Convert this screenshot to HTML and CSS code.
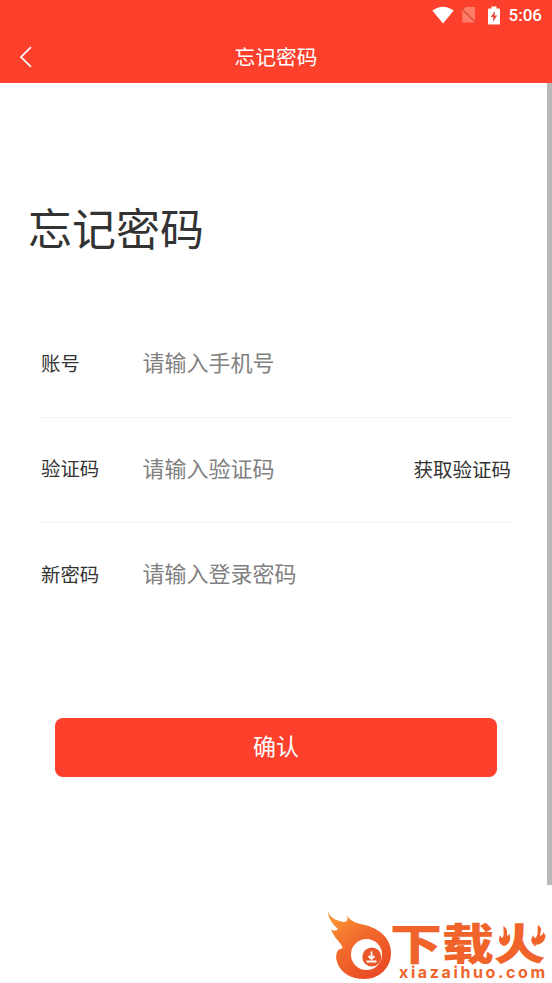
FILE: index.html
```html
<!DOCTYPE html>
<html lang="zh-CN">
<head>
<meta charset="utf-8">
<title>忘记密码</title>
<link rel="stylesheet" href="styles.css">
</head>
<body>
<header class="top">
  <div class="status">
    <svg class="wifi" width="22" height="18" viewBox="0 0 22 18"><path d="M0.3 4.5Q11 -3.2 21.7 4.5L11 17.5Z" fill="#fff"/></svg>
    <svg class="sim" width="18" height="18" viewBox="0 0 18 18"><path d="M6 1H15V16.500H2.300V4.500Z" fill="#ff7d67"/><path d="M.8 2L16.200 17" stroke="#d94a36" stroke-width="1.400"/></svg>
    <svg class="battery" width="12" height="19" viewBox="0 0 12 19"><path d="M3.5 0.5h5v2H11q1 0 1 1V17.500q0 1-1 1H1q-1 0-1-1V3.500q0-1 1-1h2.500Z" fill="#fff"/><path d="M7 5L2.800 11H5.400L4.800 16L9.200 9.500H6.500Z" fill="#e84634"/></svg>
    <span class="time">5:06</span>
  </div>
  <nav class="nav">
    <svg class="back" width="14" height="22" viewBox="0 0 14 22"><path d="M12 1.200L2 11L12 20.800" fill="none" stroke="#fff" stroke-width="1.700"/></svg>
    <h1 class="nav-title">忘记密码</h1>
  </nav>
</header>
<div class="view">
  <main class="page">
    <h2 class="title">忘记密码</h2>
    <form class="form">
      <label class="row"><span class="label">账号</span><span class="hint">请输入手机号</span></label>
      <label class="row"><span class="label">验证码</span><span class="hint">请输入验证码</span><span class="code">获取验证码</span></label>
      <label class="row"><span class="label">新密码</span><span class="hint">请输入登录密码</span></label>
    </form>
    <button class="submit" type="button">确认</button>
  </main>
  <div class="scrollbar"></div>
</div>
<footer class="footer">
  <svg class="logo" width="232" height="83" viewBox="0 0 232 83">
    <defs>
      <linearGradient id="fire" x1="0" y1="0" x2=".7" y2="1"><stop offset="0" stop-color="#fa9d35"/><stop offset=".5" stop-color="#f26a2c"/><stop offset="1" stop-color="#e94b24"/></linearGradient>
    </defs>
    <path d="M8 11.500C10 17 15 20 21 21.500C25 22.500 28 22 27.500 18L26.500 15C30 21 36 23 43 24.500C59 28 71 38 71 53C71 68 59 79 44.500 79C30 79 19 72 16.500 60C15.500 55 17 50 20 49C22 49 23 48 22 46C18 40 13 36 11 29C13 31 16 31 18 29C13 25 8 18 8 11.500Z" fill="url(#fire)"/>
    <circle cx="46.500" cy="54.500" r="15.500" fill="#fff"/>
    <circle cx="51.800" cy="57" r="9.500" fill="#e9572a"/>
    <path d="M51.500 51.500V58M48.500 56L51.500 59L54.500 56M46.500 61.500H56.500" fill="none" stroke="#fff" stroke-width="1.800"/>
    <g class="brand" transform="translate(0 60.300) scale(1 .83)">
      <text x="70" y="0">下</text><text x="122" y="0">载</text><text x="173.500" y="0">火</text>
    </g>
    <path d="M174 22H191.500V43L188 46.500H174ZM208.500 22H230V45H211L208.500 43Z" fill="#fff"/>
    <g class="flames">
      <path d="M183.500 26C189 30 186 34 187.500 36C189 35 189 34 189 33C192 39 189 45 184 46C179 45 178 40 180 35C181 37 181 38 182 38C185 35 183 31 183.500 26Z"/>
      <path d="M218 25C224 29 219 33 220.500 36C222 35 223 34 223.500 32C224 34 225 34 225.500 36C225 42 220 45 214 45C210 42 211 38 213.500 35C213.500 37 214 38 215.500 38C219 34 217 30 218 25Z"/>
    </g>
    <text class="site" x="79" y="78.300" textLength="146" lengthAdjust="spacing">xiazaihuo.com</text>
  </svg>
</footer>
</body>
</html>
```
FILE: styles.css
```css
* { box-sizing: border-box; }
body {
  margin: 0;
  height: 983px;
  overflow: hidden;
  background: #fff;
  color: #333;
  font-family: "Noto Sans CJK SC", sans-serif;
  display: flex;
  flex-direction: column;
}
.top {
  height: 83px;
  flex: none;
  background: #fc402c;
  color: #fff;
}
.status {
  height: 30px;
  display: flex;
  align-items: center;
  justify-content: flex-end;
  padding-right: 10px;
}
.sim { margin-left: 6px; }
.battery { margin-left: 10px; }
.time {
  margin-left: 9px;
  font: 500 17px/30px Roboto, sans-serif;
}
.nav {
  height: 53px;
  display: grid;
  grid-template-columns: 34px 1fr 34px;
  align-items: center;
}
.back { margin-left: 19px; }
.nav-title {
  margin: 0;
  text-align: center;
  font-size: 20.7px;
  font-weight: 400;
  line-height: 50px;
  padding-bottom: 2px;
}
.view {
  height: 802px;
  flex: none;
  display: flex;
}
.page { flex: 1; }
.scrollbar { width: 5px; background: #b8b8b8; }
.title {
  margin: 111px 0 0 28px;
  font-size: 44px;
  font-weight: 400;
  line-height: 66px;
}
.form { margin: 52px 36px 0 41px; }
.row {
  height: 105.5px;
  display: flex;
  align-items: center;
  padding-bottom: 4px;
  border-bottom: 1px solid #f3f3f3;
}
.row:last-child { border-bottom-color: transparent; }
.label { width: 101.500px; font-size: 19.400px; }
.hint { flex: 1; font-size: 22px; line-height: 32px; padding-bottom: 2px; color: #808080; }
.code { font-size: 19.500px; padding-top: 1px; }
.submit {
  display: block;
  width: 442px;
  height: 59px;
  margin: 89px 0 0 55px;
  padding: 0 0 5px;
  border: 0;
  border-radius: 8px;
  background: #fc402c;
  color: #fff;
  font: 400 23px "Noto Sans CJK SC", sans-serif;
}
.footer {
  margin-top: 15px;
  display: flex;
  justify-content: flex-end;
}
.brand {
  font: 900 52px "Noto Sans CJK SC", sans-serif;
  fill: #f0632a;
}
.flames { fill: #f0632a; }
.site {
  font: 700 16px Inter, sans-serif;
  fill: #f0632a;
}
```
